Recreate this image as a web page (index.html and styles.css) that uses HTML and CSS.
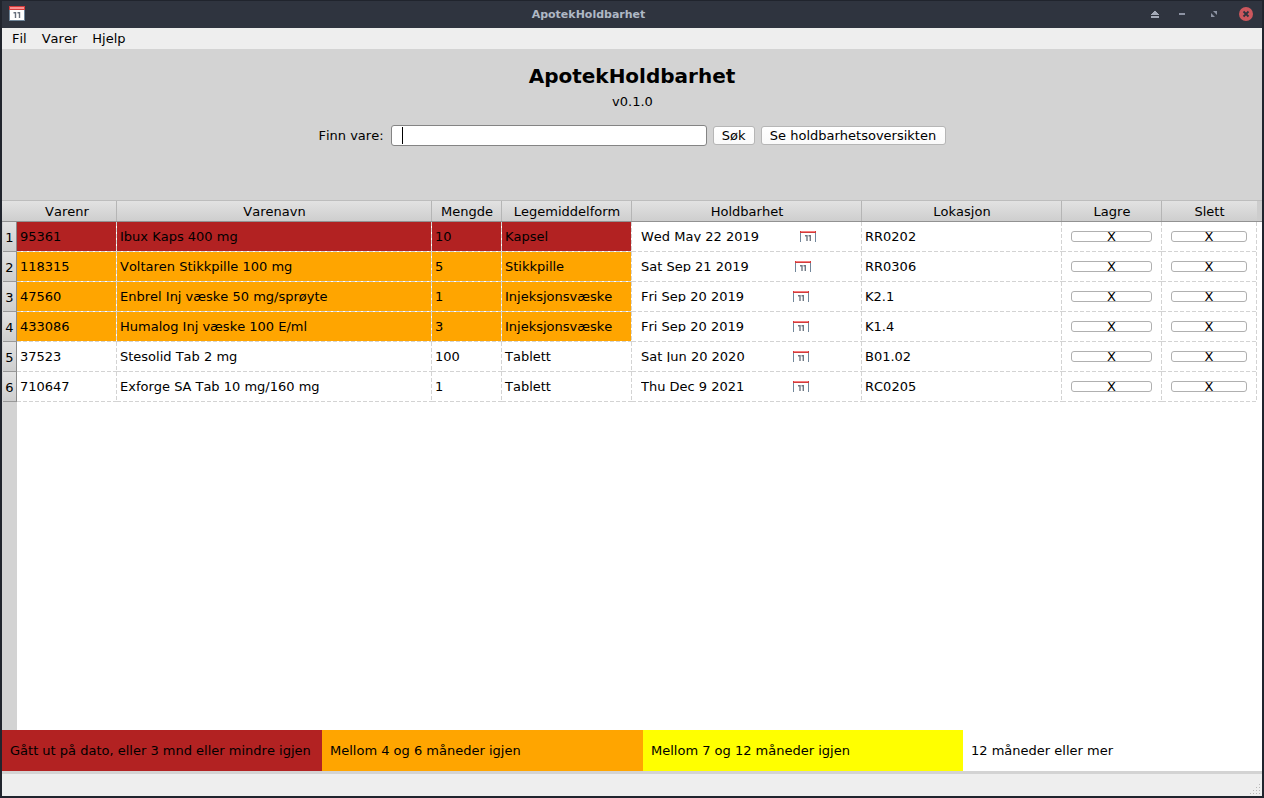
FILE: index.html
```html
<!DOCTYPE html>
<html lang="nb">
<head>
<meta charset="utf-8">
<title>ApotekHoldbarhet</title>
<link rel="stylesheet" href="styles.css">
</head>
<body>
<svg width="0" height="0" class="defs">
  <symbol id="cal" viewBox="0 0 16 15">
    <rect width="16" height="15" fill="#6f8599"/>
    <rect x="1" y="3" width="14" height="11" fill="#fff"/>
    <rect width="16" height="4" fill="#d33b3b"/>
    <rect x="1" y="1" width="14" height="2" fill="#f99090"/>
    <path d="M4.500 6.700h2v5.300M8.500 6.700h2v5.300" fill="none" stroke="#68707c" stroke-width="1.4"/>
  </symbol>
  <symbol id="calcut" viewBox="0 0 16 11">
    <path d="M.5 0v11M15.500 0v11" stroke="#71869a"/>
    <rect width="16" height="2" fill="#d33b3b"/>
    <rect x="1" width="14" height="1" fill="#f58080"/>
    <path d="M5 4.700h2v5.300M8.500 4.700h1.800v5.300" fill="none" stroke="#6f7883" stroke-width="1.400"/>
  </symbol>
</svg>
<div class="window">
  <header class="titlebar">
    <svg class="appicon" width="16" height="15"><use href="#cal"/></svg>
    <div class="title">ApotekHoldbarhet</div>
    <svg class="controls" width="108" height="16" viewBox="0 0 108 16">
      <path d="M0 9v-1h1v-1h1v-1h1v-1h2v1h1v1h1v1h1v1zM0 10h8v2h-8z" fill="#a3a9b7"/>
      <path d="M28 7h6v2h-6z" fill="#8d93a3"/>
      <path d="M62 5h4v4zM60 7l4 4h-4z" fill="#8d93a3"/>
      <circle cx="95" cy="8" r="7" fill="#cc575d"/>
      <path d="M92.500 5.500l5 5M97.500 5.500l-5 5" stroke="#2f343f" stroke-width="1.800"/>
    </svg>
  </header>
  <nav class="menu"><span>Fil</span><span>Varer</span><span>Hjelp</span></nav>
  <section class="top">
    <h1>ApotekHoldbarhet</h1>
    <div class="version">v0.1.0</div>
    <div class="search"><label>Finn vare:</label><div class="field"><i class="caret"></i></div><div class="btn sok">Søk</div><div class="btn over">Se holdbarhetsoversikten</div></div>
  </section>
  <main class="table">
    <div class="row head"><b class="corner"></b><b>Varenr</b><b>Varenavn</b><b>Mengde</b><b>Legemiddelform</b><b>Holdbarhet</b><b>Lokasjon</b><b>Lagre</b><b>Slett</b><b class="rest"></b></div>
    <div class="row red"><em>1</em><span>95361</span><span>Ibux Kaps 400 mg</span><span>10</span><span>Kapsel</span><span class="date"><u class="w1">Wed May 22 2019</u><svg width="16" height="11"><use href="#calcut"/></svg></span><span>RR0202</span><span class="act"><i>X</i></span><span class="act"><i>X</i></span></div>
    <div class="row orange"><em>2</em><span>118315</span><span>Voltaren Stikkpille 100 mg</span><span>5</span><span>Stikkpille</span><span class="date"><u class="w2">Sat Sep 21 2019</u><svg width="16" height="11"><use href="#calcut"/></svg></span><span>RR0306</span><span class="act"><i>X</i></span><span class="act"><i>X</i></span></div>
    <div class="row orange"><em>3</em><span>47560</span><span>Enbrel Inj væske 50 mg/sprøyte</span><span>1</span><span>Injeksjonsvæske</span><span class="date"><u>Fri Sep 20 2019</u><svg width="16" height="11"><use href="#calcut"/></svg></span><span>K2.1</span><span class="act"><i>X</i></span><span class="act"><i>X</i></span></div>
    <div class="row orange"><em>4</em><span>433086</span><span>Humalog Inj væske 100 E/ml</span><span>3</span><span>Injeksjonsvæske</span><span class="date"><u>Fri Sep 20 2019</u><svg width="16" height="11"><use href="#calcut"/></svg></span><span>K1.4</span><span class="act"><i>X</i></span><span class="act"><i>X</i></span></div>
    <div class="row"><em>5</em><span>37523</span><span>Stesolid Tab 2 mg</span><span>100</span><span>Tablett</span><span class="date"><u>Sat Jun 20 2020</u><svg width="16" height="11"><use href="#calcut"/></svg></span><span>B01.02</span><span class="act"><i>X</i></span><span class="act"><i>X</i></span></div>
    <div class="row"><em>6</em><span>710647</span><span>Exforge SA Tab 10 mg/160 mg</span><span>1</span><span>Tablett</span><span class="date"><u>Thu Dec 9 2021</u><svg width="16" height="11"><use href="#calcut"/></svg></span><span>RC0205</span><span class="act"><i>X</i></span><span class="act"><i>X</i></span></div>
  </main>
  <section class="legend">
    <div class="l-red">Gått ut på dato, eller 3 mnd eller mindre igjen</div>
    <div class="l-orange">Mellom 4 og 6 måneder igjen</div>
    <div class="l-yellow">Mellom 7 og 12 måneder igjen</div>
    <div class="l-white">12 måneder eller mer</div>
  </section>
  <footer class="status">
    <svg width="11" height="11" fill="#b8b8b8"><path d="M9 0h1v1h-1zM6 3h1v1h-1zM9 3h1v1h-1zM3 6h1v1h-1zM6 6h1v1h-1zM9 6h1v1h-1zM0 9h1v1h-1zM3 9h1v1h-1zM6 9h1v1h-1zM9 9h1v1h-1z"/></svg>
  </footer>
</div>
</body>
</html>
```
FILE: styles.css
```css
* { box-sizing: border-box; }
body { margin: 0; background: #20242d; overflow: hidden; font: 13px/20px "DejaVu Sans", sans-serif; font-kerning: none; color: #000; }
.defs { display: block; }
.window { width: 1264px; height: 798px; border: solid #20242d; border-width: 1px 2px 2px; display: flex; flex-direction: column; }
.titlebar { height: 27px; flex: none; background: #2f343f; display: flex; align-items: flex-start; padding: 5px 0 0 7px; }
.title { flex: 1; text-align: center; font-weight: bold; font-size: 11px; line-height: 17px; color: #afb8c5; padding-left: 1px; }
.titlebar .controls { flex: none; margin-right: 3px; }
.menu { height: 21px; flex: none; background: #eee; display: flex; gap: 15px; padding-left: 10px; line-height: 21px; }
.top { height: 151px; flex: none; background: #d3d3d3; display: flex; flex-direction: column; align-items: center; padding-top: 15px; }
h1 { margin: 0; font-size: 20px; line-height: 24px; font-kerning: normal; }
.version { margin-top: 4px; padding-left: 1px; }
.search { display: flex; align-items: center; margin-top: 12px; height: 22px; }
.search label { margin-right: 7px; padding-top: 1px; }
.field { width: 316px; height: 21px; border: 1px solid #848484; border-radius: 3px; background: #fff; margin-right: 6px; padding: 1px 0 0 10px; }
.caret { display: block; width: 1px; height: 17px; background: #000; }
.btn { height: 19px; border: 1px solid #b6b6b6; border-radius: 3px; background: linear-gradient(#fff, #fafafa); text-align: center; line-height: 18px; white-space: nowrap; }
.sok { width: 42px; margin-right: 6px; }
.over { width: 185px; }
.table { flex: 1; background: linear-gradient(90deg, #d3d3d3 15px, #fff 15px); }
.row { display: grid; grid-template-columns: 15px 100px 315px 70px 130px 230px 200px 100px 95px 5px; grid-template-rows: 100%; height: 30px; }
.head { height: 22px; background: linear-gradient(#e2e2e2, #cecece); border-top: 1px solid #bdbdbd; border-bottom: 1px solid #929292; }
.head b { font-weight: normal; text-align: center; line-height: 21px; border-right: 1px solid #b5b5b5; padding-left: 1px; }
.head .corner, .head b:nth-child(9) { border-right: 0; padding-left: 0; }
.head .rest { background: #cdcdcd; border: 0; }
.row em { font-style: normal; text-align: center; line-height: 31px; border-right: 1px solid #8b8b8b; border-bottom: 1px solid #999; background: linear-gradient(#e2e2e2, #cecece); margin-left: 1px; }
.row span {
  --fill: #fff;
  padding-left: 3px;
  line-height: 30px;
  white-space: nowrap;
  background:
    repeating-linear-gradient(90deg, #d3d3d3 0 4px, #fff 4px 6px) left bottom / 100% 1px no-repeat,
    repeating-linear-gradient(#d3d3d3 0 4px, #fff 4px 6px) right top / 1px 100% no-repeat,
    var(--fill);
}
.red span:nth-child(-n+5) { --fill: #b22222; }
.orange span:nth-child(-n+5) { --fill: #ffa500; }
.row .date { display: flex; padding: 9px 0 0 9px; }
.date u { text-decoration: none; width: 152px; height: 11px; line-height: 12px; overflow: hidden; }
.date .w1 { width: 159px; }
.date .w2 { width: 154px; }
.date svg { flex: none; }
.row .act { padding: 9px 10px 0 9px; }
.act i { display: block; font-style: normal; height: 11px; line-height: 10px; border: 1px solid #b0b0b0; border-radius: 3px; text-align: center; }
.legend { height: 41px; flex: none; display: grid; grid-template-columns: 320px 321px 320px 299px; line-height: 41px; background: #fff; }
.legend div { padding-left: 8px; white-space: nowrap; }
.l-red { background: #b22222; }
.l-orange { background: #ffa500; }
.l-yellow { background: #ff0; }
.status { height: 25px; flex: none; background: #eee; border-top: 3px solid #d3d3d3; display: flex; justify-content: flex-end; align-items: flex-end; padding: 0 1px 1px 0; }
```
